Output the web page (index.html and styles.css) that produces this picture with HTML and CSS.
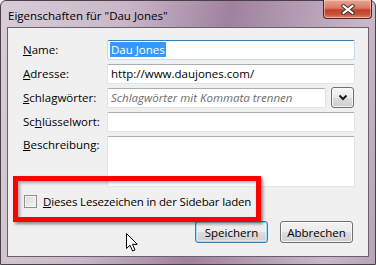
FILE: index.html
```html
<!DOCTYPE html>
<html lang="de">
<head>
    <meta charset="UTF-8">
    <meta name="viewport" content="width=device-width, initial-scale=1.0">
    <title>Eigenschaften</title>
    <link rel="stylesheet" href="styles.css">
</head>
<body>
    <div class="window">
        <div class="titlebar">
            <span class="title">Eigenschaften für "Dau Jones"</span>
            <button class="close" aria-label="Schließen">
                <svg width="14" height="11" viewBox="0 0 14 11">
                    <path d="M2.5 2 L11.5 9 M11.5 2 L2.5 9" stroke="#3a3340" stroke-width="4" stroke-linecap="square"/>
                    <path d="M2.5 2 L11.5 9 M11.5 2 L2.5 9" stroke="#fff" stroke-width="2" stroke-linecap="square"/>
                </svg>
            </button>
        </div>
        <div class="client">
            <div class="fields">
                <label class="lbl"><u>N</u>ame:</label>
                <div class="input focus"><span class="sel">Dau Jones</span></div>

                <label class="lbl"><u>A</u>dresse:</label>
                <div class="input">http://www.daujones.com/</div>

                <label class="lbl"><u>S</u>chlagwörter:</label>
                <div class="tagrow">
                    <div class="input placeholder">Schlagwörter mit Kommata trennen</div>
                    <button class="drop">
                        <svg width="10" height="7" viewBox="0 0 10 7">
                            <path d="M1.5 1.5 L5 5 L8.5 1.5" fill="none" stroke="#1a1a1a" stroke-width="2"/>
                        </svg>
                    </button>
                </div>

                <label class="lbl">Sc<u>h</u>lüsselwort:</label>
                <div class="input"></div>

                <label class="lbl top"><u>B</u>eschreibung:</label>
                <div class="input area"></div>
            </div>

            <div class="check">
                <span class="box"></span>
                <span class="check-label"><u>D</u>ieses Lesezeichen in der Sidebar laden</span>
            </div>

            <div class="buttons">
                <button class="btn default">Speichern</button>
                <button class="btn">Abbrechen</button>
            </div>

            <!-- annotation + mouse pointer sit over the dialog -->
            <div class="mark"></div>
            <svg class="cursor" width="13" height="19" viewBox="0 0 13 19">
                <path d="M0.5 0.5 L0.5 15.5 L4 12.2 L6.6 18 L9 17 L6.5 11.3 L11.3 11.3 Z" fill="#fff" stroke="#000" stroke-width="1" stroke-linejoin="miter"/>
            </svg>
        </div>
    </div>
</body>
</html>
```

FILE: styles.css
```css
body {
    margin: 0;
    background: #fff;
    font-family: 'Open Sans', 'Noto Sans', sans-serif;
    font-size: 11.5px;
    color: #000;
}
.window {
    width: 376px;
    height: 265px;
    box-sizing: border-box;
    border: 1px solid #4a404a;
    border-radius: 6px 6px 0 0;
    background: linear-gradient(100deg, #d8cdd8 0%, #c8b7c8 30%, #a0819f 55%, #b49db4 72%, #c9b8c9 88%, #b9a3b9 100%);
}
.titlebar {
    display: flex;
    height: 26px;
    padding-left: 7px;
}
.title {
    padding-top: 7px;
    line-height: 16px;
}
.close {
    margin-left: auto;
    margin-right: 3px;
    width: 49px;
    height: 19px;
    margin-top: -1px;
    border: 1px solid #4d2a2a;
    border-top: none;
    border-radius: 0 0 4px 4px;
    background: linear-gradient(to bottom, #e7a595 0%, #d97a64 45%, #c1412c 55%, #c9503a 80%, #e08a70 100%);
    box-shadow: inset 0 0 0 1px rgba(255, 220, 210, 0.5);
    display: flex;
    align-items: center;
    justify-content: center;
    padding: 0;
}
.client {
    position: relative;
    margin: 0 6px;
    height: 230px;
    box-sizing: border-box;
    border: 1px solid #6a606a;
    background: #f0f0f0;
    padding: 12px 13px 0 15px;
}
.fields {
    display: grid;
    grid-template-columns: 84px 1fr;
    grid-template-rows: 20px 20px 20px 20px 51px;
    row-gap: 4px;
}
.lbl {
    align-self: center;
    line-height: 16px;
}
.lbl.top {
    align-self: start;
    padding-top: 1px;
}
.input {
    box-sizing: border-box;
    height: 20px;
    border: 1px solid #e2e3ea;
    border-top-color: #abadb3;
    border-radius: 2px;
    background: #fff;
    padding: 0 3px;
    line-height: 18px;
    white-space: nowrap;
    overflow: hidden;
}
.input.focus {
    border-color: #c5daed;
    border-top-color: #3d7bad;
    padding-left: 2px;
}
.sel {
    display: inline-block;
    background: #3399ff;
    color: #fff;
    line-height: 15px;
    margin-top: 1px;
    padding: 0 1px;
}
.input.placeholder {
    flex: 1;
    color: #6d6d6d;
    font-style: italic;
}
.input.area {
    height: 51px;
}
.tagrow {
    display: flex;
    gap: 5px;
    padding-right: 1px;
}
.drop {
    width: 23px;
    height: 21px;
    margin-top: -1px;
    padding: 0;
    border: 1px solid #707070;
    border-radius: 3px;
    background: linear-gradient(to bottom, #f6f6f6 0%, #ebebeb 50%, #dddddd 51%, #cfcfcf 100%);
    box-shadow: inset 0 0 0 1px rgba(255, 255, 255, 0.7);
    display: flex;
    align-items: center;
    justify-content: center;
}
.check {
    display: flex;
    align-items: center;
    gap: 6px;
    height: 15px;
    margin-top: 7px;
    padding-left: 1px;
    line-height: 15px;
}
.check-label {
    letter-spacing: -0.15px;
}
.box {
    width: 13px;
    height: 13px;
    box-sizing: border-box;
    border: 1px solid #8e8f8f;
    background: linear-gradient(135deg, #d9d9d9, #f6f6f6);
    box-shadow: inset 0 0 0 1px #f4f4f4;
}
.buttons {
    display: flex;
    justify-content: flex-end;
    gap: 12px;
    margin-top: 12px;
    padding-right: 2px;
}
.btn {
    width: 73px;
    height: 22px;
    padding: 0;
    font-family: inherit;
    font-size: 11.5px;
    color: #000;
    border: 1px solid #707070;
    border-radius: 3px;
    background: linear-gradient(to bottom, #f2f2f2 0%, #ebebeb 50%, #dddddd 51%, #cfcfcf 100%);
    box-shadow: inset 0 0 0 1px rgba(255, 255, 255, 0.75);
}
.btn.default {
    border-color: #3c7fb1;
    box-shadow: inset 0 0 0 1px #9fd9f6, inset 0 0 0 2px rgba(255, 255, 255, 0.4);
}
.mark {
    position: absolute;
    left: 5px;
    top: 148px;
    width: 248px;
    height: 46px;
    box-sizing: border-box;
    border: 5px solid #ff0000;
    box-shadow: 2px 2px 3px rgba(0, 0, 0, 0.45), inset 2px 2px 3px rgba(0, 0, 0, 0.3);
}
.cursor {
    position: absolute;
    left: 118px;
    top: 205px;
}
```
